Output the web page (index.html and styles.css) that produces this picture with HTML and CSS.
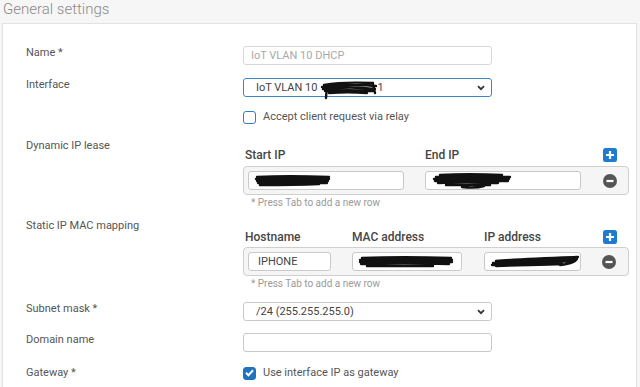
FILE: index.html
```html
<!DOCTYPE html>
<html lang="en">
<head>
    <meta charset="UTF-8">
    <meta name="viewport" content="width=device-width, initial-scale=1.0">
    <title>DHCP server - General settings</title>
    <link rel="stylesheet" href="styles.css">
</head>
<body>
    <div class="page-title">General settings</div>
    <div class="card">
        <div class="row row-name">
            <div class="lbl">Name *</div>
            <div class="field disabled">IoT VLAN 10 DHCP</div>
        </div>

        <div class="row row-iface">
            <div class="lbl">Interface</div>
            <div class="field select active">
                <span>IoT VLAN 10</span>
                <svg class="scribble s-iface" width="56" height="14" viewBox="0 0 56 14">
                    <path d="M3 4 C14 2 30 1 52 2 M1 6 C18 4 36 3 55 5 M2 8 C20 6 38 6 54 8 M4 10 C18 9 34 9 52 10 M8 12 C20 11 34 11 46 12 M6 4 L5 17 M52 3 L54 12"/>
                </svg>
                <span>1</span>
                <svg class="chev" width="8" height="6" viewBox="0 0 8 6"><path d="M1 1.2 L4 4.2 L7 1.2"/></svg>
            </div>
        </div>

        <div class="row row-relay">
            <div class="lbl"></div>
            <div class="check"><span class="box"></span>Accept client request via relay</div>
        </div>

        <div class="row row-lease">
            <div class="lbl">Dynamic IP lease</div>
            <div class="multi">
                <div class="mhead">
                    <span class="hd hd-start">Start IP</span>
                    <span class="hd hd-end">End IP</span>
                    <svg class="add" width="14" height="14" viewBox="0 0 14 14"><rect width="14" height="14" rx="2.5"/><path d="M7 3 V11 M3 7 H11"/></svg>
                </div>
                <div class="mbox">
                    <div class="field w-start">
                        <svg class="scribble" width="76" height="12" viewBox="0 0 76 12"><path d="M2 2 C20 1 50 1 74 2 M1 4 C24 3 50 3 74 4 M2 6 C24 5 50 5 73 6 M3 8 C26 7 50 7 72 8 M5 10 C20 10 40 10 64 9"/></svg>
                    </div>
                    <div class="field w-end">
                        <svg class="scribble" width="80" height="16" viewBox="0 0 80 16"><path d="M8 2 C25 1 50 1 70 2 M4 4 C24 3 50 3 78 4 M2 6 C26 5 52 5 77 6 M3 8 C26 7 52 7 76 8 M6 10 C24 9 44 9 66 10 M14 12 C30 12 44 12 58 12 M30 14 C38 15 46 15 52 13"/></svg>
                    </div>
                    <svg class="del" width="14" height="14" viewBox="0 0 14 14"><circle cx="7" cy="7" r="7"/><path d="M3.5 7 H10.5"/></svg>
                </div>
                <div class="note">* Press Tab to add a new row</div>
            </div>
        </div>

        <div class="row row-static">
            <div class="lbl">Static IP MAC mapping</div>
            <div class="multi">
                <div class="mhead">
                    <span class="hd hd-host">Hostname</span>
                    <span class="hd hd-mac">MAC address</span>
                    <span class="hd hd-ip">IP address</span>
                    <svg class="add" width="14" height="14" viewBox="0 0 14 14"><rect width="14" height="14" rx="2.5"/><path d="M7 3 V11 M3 7 H11"/></svg>
                </div>
                <div class="mbox">
                    <div class="field w-host">IPHONE</div>
                    <div class="field w-mac">
                        <svg class="scribble" width="94" height="12" viewBox="0 0 94 12"><path d="M3 2 C30 1 60 1 92 2 M1 4 C30 3 62 3 93 4 M1 6 C30 5 62 5 93 6 M2 8 C30 7 60 7 90 8 M8 10 C30 10 50 10 74 10"/></svg>
                    </div>
                    <div class="field w-ip">
                        <svg class="scribble" width="90" height="12" viewBox="0 0 90 12"><path d="M6 5 C30 3 60 2 88 1 M3 7 C30 5 60 4 87 3 M2 9 C30 7 60 6 84 5 M6 10 C30 9 50 9 72 8 M86 1 C89 5 80 8 70 9"/></svg>
                    </div>
                    <svg class="del" width="14" height="14" viewBox="0 0 14 14"><circle cx="7" cy="7" r="7"/><path d="M3.5 7 H10.5"/></svg>
                </div>
                <div class="note">* Press Tab to add a new row</div>
            </div>
        </div>

        <div class="row row-subnet">
            <div class="lbl">Subnet mask *</div>
            <div class="field select">
                <span>/24 (255.255.255.0)</span>
                <svg class="chev" width="8" height="6" viewBox="0 0 8 6"><path d="M1 1.2 L4 4.2 L7 1.2"/></svg>
            </div>
        </div>

        <div class="row row-domain">
            <div class="lbl">Domain name</div>
            <div class="field"></div>
        </div>

        <div class="row row-gateway">
            <div class="lbl">Gateway *</div>
            <div class="check">
                <span class="box checked"><svg width="13" height="13" viewBox="0 0 13 13"><path d="M3 6.8 L5.4 9.2 L10 4.2"/></svg></span>
                Use interface IP as gateway
            </div>
        </div>
    </div>
</body>
</html>
```

FILE: styles.css
```css
body { margin: 0; height: 100vh; background: #f6f6f6; font-family: Roboto, "Noto Sans", sans-serif; color: #555; font-size: 11px; overflow: hidden; }
.page-title { height: 23px; line-height: 18px; padding-left: 3px; font-size: 15px; font-weight: 300; color: #8a8a8a; }
.card { margin: 0 3px 0 2px; height: calc(100vh - 23px); background: #fff; border: 1px solid #e2e2e2; border-bottom: none; padding: 22px 0 0 23px; box-sizing: border-box; }

.row { display: flex; align-items: flex-start; }
.lbl { width: 217px; flex: none; line-height: 13px; color: #555; }
.row-iface { margin-top: 13px; }
.row-relay { margin-top: 14px; }
.row-lease { margin-top: 15px; }
.row-static { margin-top: 11px; }
.row-subnet { margin-top: 13px; }
.row-domain { margin-top: 12px; }
.row-gateway { margin-top: 14px; }

.field { width: 249px; height: 19px; box-sizing: border-box; border: 1px solid #c9c9c9; border-radius: 3px; background: #fff; padding: 0 7px; display: flex; align-items: center; color: #444; white-space: nowrap; }
.field.disabled { color: #a9a9a9; border-color: #d8d8d8; }
.field.select { padding: 0 6px 0 12px; }
.field.select span { margin-right: 3px; }
.field.active { border-color: #3d86c6; }
.chev { margin-left: auto; fill: none; stroke: #333; stroke-width: 1.8; }

.scribble { fill: none; stroke: #111; stroke-width: 2.4; stroke-linecap: round; overflow: visible; }
.s-iface { margin: 0 1px 0 0; }

.check { display: flex; align-items: center; color: #555; line-height: 14px; }
.box { width: 13px; height: 13px; box-sizing: border-box; border: 1.5px solid #2f7fc4; border-radius: 3px; background: #fff; margin-right: 7px; flex: none; }
.box.checked { background: #1f72bd; border-color: #1f72bd; position: relative; }
.box.checked svg { position: absolute; left: -1.5px; top: -1.5px; fill: none; stroke: #fff; stroke-width: 2; }
.row-relay .check { margin-top: -1px; }

.multi { width: 386px; padding-top: 7px; }
.row-static .multi { padding-top: 9px; }
.mhead { display: flex; align-items: center; height: 18px; padding-left: 2px; }
.hd { font-size: 12px; font-weight: 500; color: #454545; flex: none; }
.hd-start { width: 180px; }
.hd-end { width: 178px; }
.hd-host { width: 107px; }
.hd-mac { width: 132px; }
.hd-ip { width: 119px; }
.add rect { fill: #1d7ccf; }
.add path { stroke: #fff; stroke-width: 2.2; }

.mbox { margin-top: 2px; height: 29px; box-sizing: border-box; border: 1px solid #cfcfcf; border-radius: 4px; background: #f5f5f5; display: flex; align-items: center; padding-left: 4px; }
.row-static .mbox { margin-top: 1px; }
.mbox .field { margin-right: 21px; }
.mbox .field:nth-of-type(2) { margin-right: 22px; }
.w-start { width: 156px; }
.w-end { width: 156px; }
.w-host { width: 83px; padding-left: 9px; }
.w-mac { width: 110px; margin-right: 22px !important; }
.w-ip { width: 97px; padding-left: 5px; }
.w-start, .w-end, .w-mac { padding-left: 6px; }
.del circle { fill: #555; }
.del path { stroke: #fff; stroke-width: 2.2; }

.note { margin-top: 2px; padding-left: 8px; font-size: 10px; line-height: 11px; color: #9a9a9a; }
```
